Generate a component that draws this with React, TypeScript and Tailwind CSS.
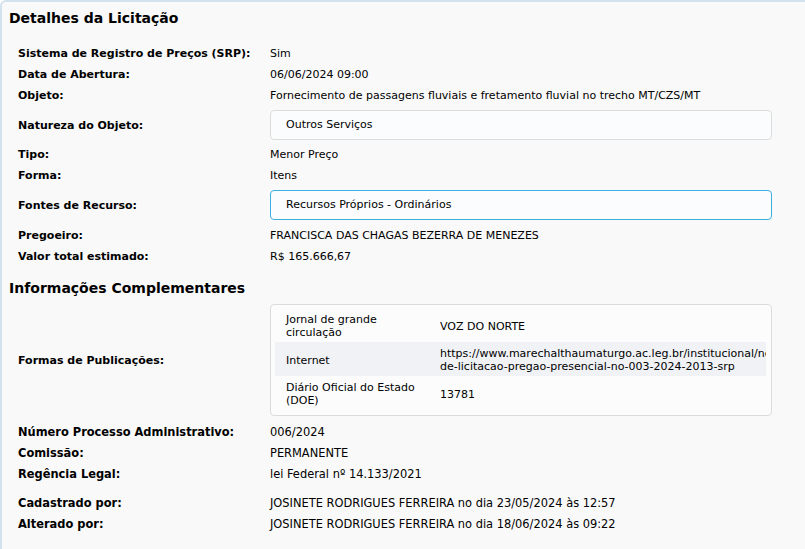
import React from "react";

const verdana = { fontFamily: '"DejaVu Sans", Verdana, sans-serif' };
const narrow = { fontFamily: '"Liberation Sans Narrow", "DejaVu Sans Condensed", "Arial Narrow", sans-serif' };

const Row = ({ label, children }: { label: string; children: React.ReactNode }) => (
  <div className="flex h-[21px] items-center pt-[2px]">
    <div className="w-[252px] shrink-0 font-bold">{label}</div>
    <div>{children}</div>
  </div>
);

const BoxRow = ({ label, value, active }: { label: string; value: string; active?: boolean }) => (
  <div className={"flex items-center mt-[4px] " + (active ? "mb-[5px]" : "mb-[4px]")}>
    <div className="w-[252px] shrink-0 font-bold pt-[2px]">{label}</div>
    <div
      className={
        "w-[502px] h-[30px] flex items-center pl-[15px] pt-[1px] rounded-[4px] bg-[#fbfcfd] border " +
        (active ? "border-[#3bafe2]" : "border-[#dcdcdc]")
      }
    >
      {value}
    </div>
  </div>
);

const publicacoes = [
  { tipo: ["Jornal de grande", "circulação"], valor: ["VOZ DO NORTE"] },
  {
    tipo: ["Internet"],
    valor: [
      "https://www.marechalthaumaturgo.ac.leg.br/institucional/noticias/aviso-",
      "de-licitacao-pregao-presencial-no-003-2024-2013-srp",
    ],
  },
  { tipo: ["Diário Oficial do Estado", "(DOE)"], valor: ["13781"] },
];

const App = () => {
  return (
    <div
      className="min-h-screen bg-[#f9f9f9] border-t-2 border-l-2 border-[#d3e3ee] rounded-tl-[6px] text-[11px] text-black"
      style={verdana}
    >
      {/* Detalhes */}
      <h2 className="pl-[7px] pt-[4px] h-[29px] text-[14px] font-bold leading-[24px]">Detalhes da Licitação</h2>
      <div className="pl-[16px] pt-[12px]">
        <Row label="Sistema de Registro de Preços (SRP):">Sim</Row>
        <Row label="Data de Abertura:">06/06/2024 09:00</Row>
        <Row label="Objeto:">Fornecimento de passagens fluviais e fretamento fluvial no trecho MT/CZS/MT</Row>
        <BoxRow label="Natureza do Objeto:" value="Outros Serviços" />
        <Row label="Tipo:">Menor Preço</Row>
        <Row label="Forma:">Itens</Row>
        <BoxRow label="Fontes de Recurso:" value="Recursos Próprios - Ordinários" active />
        <Row label="Pregoeiro:">FRANCISCA DAS CHAGAS BEZERRA DE MENEZES</Row>
        <Row label="Valor total estimado:">R$ 165.666,67</Row>
      </div>

      {/* Informações Complementares */}
      <h2 className="pl-[7px] mt-[9px] h-[24px] text-[14px] font-bold leading-[24px]">Informações Complementares</h2>
      <div className="pl-[16px] pt-[4px]">
        <div className="flex items-center">
          <div className="w-[252px] shrink-0 font-bold pt-[2px]">Formas de Publicações:</div>
          <div className="w-[502px] px-[4px] pt-[3px] pb-[5px] pr-[5px] rounded-[4px] border border-[#dcdcdc] bg-[#fcfcfd] overflow-hidden">
            {publicacoes.map((p, i) => (
              <div
                key={i}
                className={"flex items-center h-[34px] pt-[2px] leading-[13px] " + (i === 1 ? "bg-[#f0f2f5]" : "")}
              >
                <div className="w-[165px] shrink-0 pl-[11px]">
                  {p.tipo.map((t) => (
                    <div key={t}>{t}</div>
                  ))}
                </div>
                <div className="flex-1 min-w-0 overflow-hidden">
                  {p.valor.map((v) => (
                    <div key={v} className="whitespace-nowrap">{v}</div>
                  ))}
                </div>
              </div>
            ))}
          </div>
        </div>
      </div>

      <div className="pl-[16px] pt-[4px] text-[12.7px]" style={narrow}>
        <Row label="Número Processo Administrativo:">006/2024</Row>
        <Row label="Comissão:">PERMANENTE</Row>
        <Row label="Regência Legal:">lei Federal nº 14.133/2021</Row>
        <div className="h-[8px]" />
        <Row label="Cadastrado por:">JOSINETE RODRIGUES FERREIRA no dia 23/05/2024 às 12:57</Row>
        <Row label="Alterado por:">JOSINETE RODRIGUES FERREIRA no dia 18/06/2024 às 09:22</Row>
      </div>
    </div>
  );
};

export default App;
